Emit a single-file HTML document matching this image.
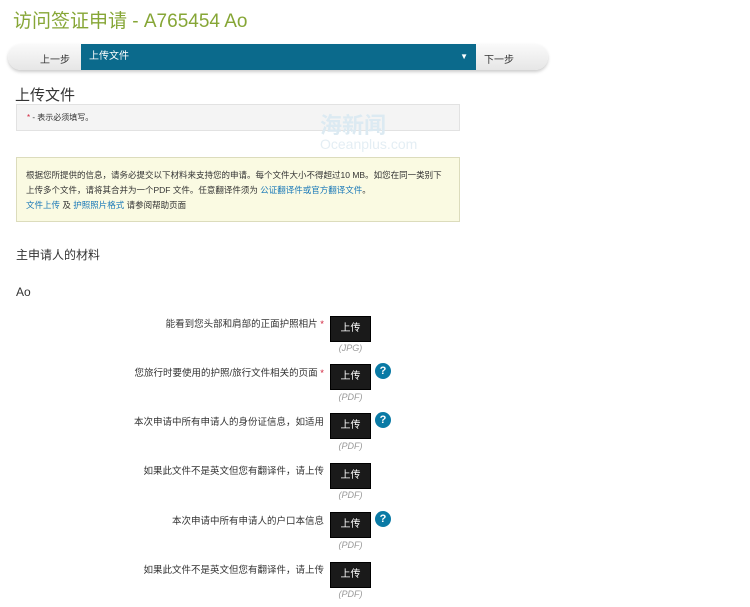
<html><head><style>
body{margin:0;width:750px;height:607px;background:#fff;font-family:"Liberation Sans","Noto Sans CJK SC",sans-serif;position:relative;overflow:hidden;color:#333}
.a{position:absolute}
.t{left:13px;top:6px;font-size:19px;color:#86a636}
.nav{left:8px;top:44px;width:540px;height:26px;border-radius:13px;background:linear-gradient(#fafafa,#e6e6e6);box-shadow:0 2px 3px #ccc}
.sel{left:81px;top:44px;width:395px;height:26px;background:#0b6a8c;color:#fff;font-size:10px;line-height:26px;text-indent:8px}
.lbl{font-size:9.5px;text-align:right;width:300px;left:24px}
.btn{left:330px;width:39px;height:24px;background:#1a1a1a;color:#fff;font-size:10px;line-height:24px;text-align:center;border:1px solid #000}
.f{left:330px;width:41px;text-align:center;font-size:9px;font-style:italic;color:#999}
.q{left:375px;width:16px;height:16px;border-radius:8px;background:#0a7aa5;color:#fff;font-size:11px;font-weight:bold;text-align:center;line-height:16px}
.s{color:#d0203a}
a{color:#1a79b8;text-decoration:none}
</style></head><body>
<div class="a t">访问签证申请 - A765454 Ao</div>
<div class="a nav"></div>
<div class="a" style="left:40px;top:51px;font-size:10px">上一步</div>
<div class="a sel">上传文件<span style="position:absolute;right:8px;font-size:8px">▼</span></div>
<div class="a" style="left:484px;top:51px;font-size:10px">下一步</div>
<div class="a" style="left:15px;top:84px;font-size:15px">上传文件</div>
<div class="a" style="left:16px;top:104px;width:442px;height:25px;background:#f4f4f4;border:1px solid #e2e2e2;font-size:8px;line-height:25px;text-indent:10px"><span class="s">*</span> - 表示必须填写。</div>
<div class="a" style="left:320px;top:108px;font-size:22px;font-weight:bold;color:#dceaf2">海新闻</div>
<div class="a" style="left:320px;top:136px;font-size:14px;color:#e4eef4">Oceanplus.com</div>
<div class="a" style="left:16px;top:157px;width:442px;height:63px;background:#fafae2;border:1px solid #dcdcbc;font-size:8.5px;line-height:15px;padding:0;"><div style="padding:10px 16px 10px 9px">根据您所提供的信息，请务必提交以下材料来支持您的申请。每个文件大小不得超过10 MB。如您在同一类别下上传多个文件，请将其合并为一个PDF 文件。任意翻译件须为 <a>公证翻译件或官方翻译文件</a>。<br><a>文件上传</a> 及 <a>护照照片格式</a> 请参阅帮助页面</div></div>
<div class="a" style="left:16px;top:246px;font-size:12px">主申请人的材料</div>
<div class="a" style="left:16px;top:285px;font-size:12px">Ao</div>

<div class="a lbl" style="top:316px">能看到您头部和肩部的正面护照相片 <span class="s">*</span></div>
<div class="a btn" style="top:316px">上传</div><div class="a f" style="top:343px">(JPG)</div>

<div class="a lbl" style="top:365px">您旅行时要使用的护照/旅行文件相关的页面 <span class="s">*</span></div>
<div class="a btn" style="top:364px">上传</div><div class="a f" style="top:392px">(PDF)</div><div class="a q" style="top:363px">?</div>

<div class="a lbl" style="top:414px">本次申请中所有申请人的身份证信息，如适用</div>
<div class="a btn" style="top:413px">上传</div><div class="a f" style="top:441px">(PDF)</div><div class="a q" style="top:412px">?</div>

<div class="a lbl" style="top:463px">如果此文件不是英文但您有翻译件，请上传</div>
<div class="a btn" style="top:463px">上传</div><div class="a f" style="top:490px">(PDF)</div>

<div class="a lbl" style="top:513px">本次申请中所有申请人的户口本信息</div>
<div class="a btn" style="top:512px">上传</div><div class="a f" style="top:540px">(PDF)</div><div class="a q" style="top:511px">?</div>

<div class="a lbl" style="top:562px">如果此文件不是英文但您有翻译件，请上传</div>
<div class="a btn" style="top:562px">上传</div><div class="a f" style="top:589px">(PDF)</div>
</body></html>
